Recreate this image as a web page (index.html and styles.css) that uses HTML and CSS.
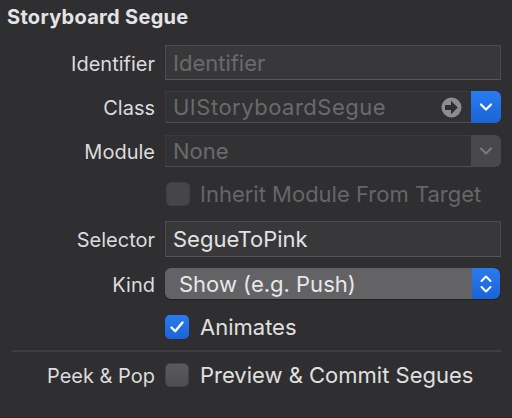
FILE: index.html
```html
<!DOCTYPE html>
<html>
<head>
<meta charset="utf-8">
<link rel="stylesheet" href="styles.css">
</head>
<body>
<div class="panel">
  <div class="title">Storyboard Segue</div>
  <div class="grid">
    <div class="label r-ident">Identifier</div>
    <div class="field tall r-ident"><span class="ph">Identifier</span></div>

    <div class="label r-class">Class</div>
    <div class="combo r-class">
      <div class="combo-text"><span class="ph wide">UIStoryboardSegue</span>
        <svg class="goto" width="21" height="21" viewBox="-10.5 -10.5 21 21"><circle r="10" fill="#8d8d90"/><path d="M-6.5 -2.6 H-0.5 V-6.8 L6.3 0 L-0.5 6.8 V2.6 H-6.5 Z" fill="#2f2f31"/></svg>
      </div>
      <div class="btn blue"><svg width="14" height="10" viewBox="0 0 14 10"><path d="M2 2.5 L7 7.5 L12 2.5" fill="none" stroke="#fff" stroke-width="2.2" stroke-linecap="round" stroke-linejoin="round"/></svg></div>
    </div>

    <div class="label r-mod">Module</div>
    <div class="combo r-mod">
      <div class="combo-text"><span class="ph">None</span></div>
      <div class="btn gray"><svg width="14" height="10" viewBox="0 0 14 10"><path d="M2 2.5 L7 7.5 L12 2.5" fill="none" stroke="#7a7a7d" stroke-width="2.2" stroke-linecap="round" stroke-linejoin="round"/></svg></div>
    </div>

    <div class="spacer r-inh"></div>
    <div class="check-row r-inh"><span class="box off dim"></span><span class="check-label dim-text">Inherit Module From Target</span></div>

    <div class="label r-sel">Selector</div>
    <div class="field tall r-sel"><span class="val">SegueToPink</span></div>

    <div class="label r-kind">Kind</div>
    <div class="popup r-kind">
      <div class="popup-text">Show (e.g. Push)</div>
      <div class="btn blue"><svg width="14" height="22" viewBox="0 0 14 22"><path d="M2.5 8 L7 3.5 L11.5 8 M2.5 14 L7 18.5 L11.5 14" fill="none" stroke="#fff" stroke-width="2" stroke-linecap="round" stroke-linejoin="round"/></svg></div>
    </div>

    <div class="spacer r-anim"></div>
    <div class="check-row r-anim"><span class="box on"><svg width="18" height="16" viewBox="0 0 18 16"><path d="M3.5 8.5 L7.2 12.2 L14.5 3.5" fill="none" stroke="#fff" stroke-width="2.4" stroke-linecap="round" stroke-linejoin="round"/></svg></span><span class="check-label">Animates</span></div>
  </div>
  <div class="sep"></div>
  <div class="grid">
    <div class="label r-peek">Peek &amp; Pop</div>
    <div class="check-row r-peek"><span class="box off"></span><span class="check-label">Preview &amp; Commit Segues</span></div>
  </div>
</div>
</body>
</html>
```

FILE: styles.css
```css
html, body {
  margin: 0;
  padding: 0;
  background: #2f2f31;
}
body {
  width: 512px;
  height: 418px;
  overflow: hidden;
  font-family: Inter, "Liberation Sans", sans-serif;
  color: #dedede;
}
.panel {
  padding: 3px 11px 0 0;
}
.title {
  font-size: 20px;
  font-weight: 700;
  letter-spacing: 0.3px;
  color: #e4e4e4;
  padding-left: 7px;
  height: 42px;
  line-height: 28px;
}
.grid {
  display: grid;
  grid-template-columns: 155px 1fr;
  column-gap: 10px;
  align-items: center;
}
.label {
  text-align: right;
  font-size: 20px;
  color: #dcdcdc;
  padding-top: 2px;
}
.r-class { margin-top: 11px; }
.r-mod { margin-top: 12px; }
.r-inh { margin-top: 15px; }
.r-sel { margin-top: 15px; }
.r-kind { margin-top: 11px; }
.r-anim { margin-top: 16px; }
.field {
  box-sizing: border-box;
  height: 35px;
  border: 1px solid #4b4b4d;
  border-bottom-color: #565658;
  background: #38383a;
  display: flex;
  align-items: center;
  padding-left: 7px;
  font-size: 22px;
}
.r-sel.field { height: 36px; }
.ph { color: #6a6a6c; }
.ph.wide { letter-spacing: 0.5px; }
.val { color: #e2e2e2; }
.combo {
  display: flex;
  height: 32px;
}
.combo-text {
  flex: 1;
  box-sizing: border-box;
  border: 1px solid #3b3b3d;
  border-bottom-color: #505052;
  border-right: none;
  background: #323234;
  display: flex;
  align-items: center;
  padding-left: 7px;
  padding-right: 9px;
  font-size: 22px;
  justify-content: space-between;
}
.btn {
  width: 30px;
  display: flex;
  align-items: center;
  justify-content: center;
  border-radius: 0 6px 6px 0;
}
.blue {
  background: linear-gradient(#2a7bf0, #1a64d6);
}
.gray {
  background: #48484a;
}
.popup {
  display: flex;
  height: 31px;
  margin-right: 1px;
  border-radius: 6px;
  overflow: hidden;
  box-shadow: 0 1px 1px rgba(0,0,0,0.35);
}
.popup-text {
  flex: 1;
  background: #636366;
  display: flex;
  align-items: center;
  padding-left: 14px;
  font-size: 22px;
  color: #e8e8e8;
}
.popup .btn { width: 28px; }
.check-row {
  display: flex;
  align-items: center;
  height: 24px;
}
.box {
  box-sizing: border-box;
  width: 24px;
  height: 24px;
  border-radius: 5px;
  flex: none;
  display: flex;
  align-items: center;
  justify-content: center;
}
.box.off {
  background: linear-gradient(#5a5a5d, #4f4f52);
  border: 1px solid #444446;
}
.box.off.dim {
  background: #464649;
  border-color: #3f3f41;
  margin-left: 1px;
}
.box.on {
  background: linear-gradient(#2a7bf0, #1a64d6);
}
.check-label {
  margin-left: 11px;
  font-size: 22px;
  color: #e0e0e0;
}
.dim-text { color: #666668; margin-left: 10px; }
.sep {
  height: 2px;
  background: #3e3e40;
  margin: 11px 0 10px 12px;
}
.r-peek { margin-top: 0; }
```
